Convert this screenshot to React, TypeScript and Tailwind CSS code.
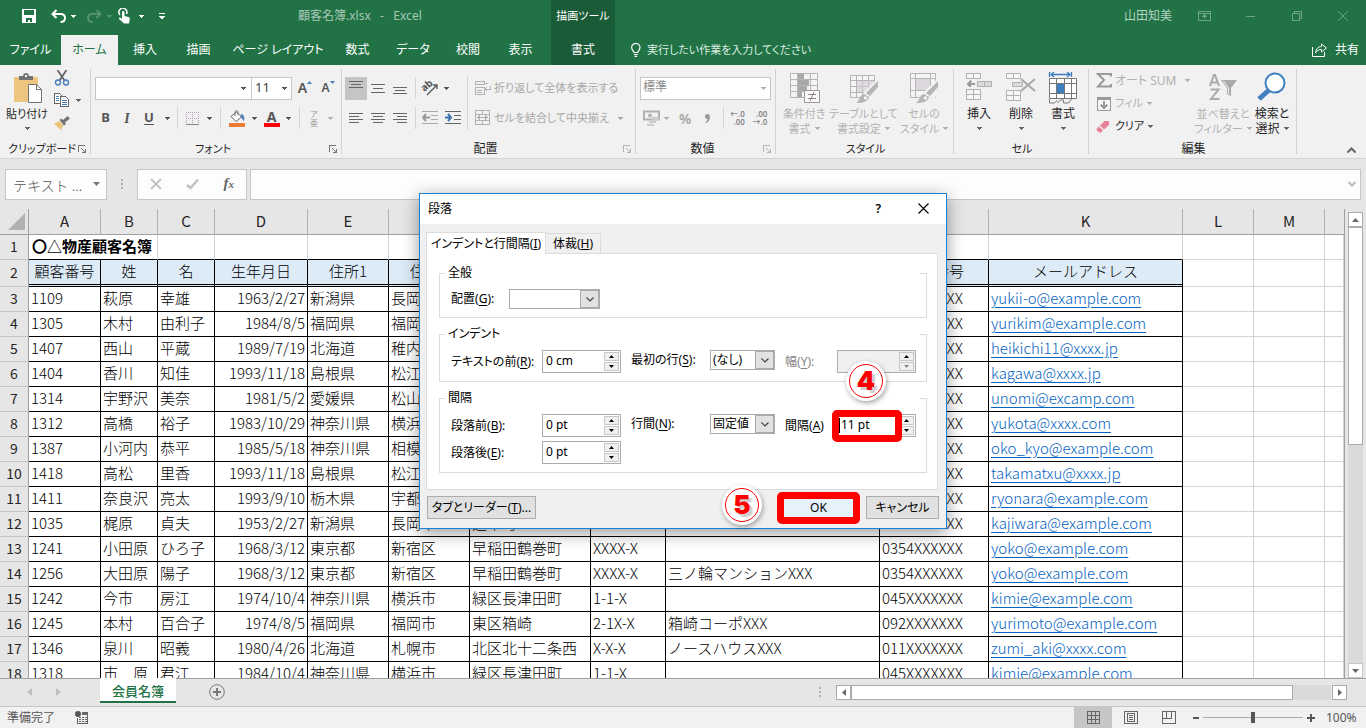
import React, { useState } from 'react';

type Row = [string, string, string, string, string, string, string, string, string, string, string];

const rows: Row[] = [
  ['1109', '萩原', '幸雄', '1963/2/27', '新潟県', '長岡市', '', '', '', '0258XXXXXX', 'yukii-o@example.com'],
  ['1305', '木村', '由利子', '1984/8/5', '福岡県', '福岡市', '', '', '', '092XXXXXXX', 'yurikim@example.com'],
  ['1407', '西山', '平蔵', '1989/7/19', '北海道', '稚内市', '', '', '', '0162XXXXXX', 'heikichi11@xxxx.jp'],
  ['1404', '香川', '知佳', '1993/11/18', '島根県', '松江市', '', '', '', '0852XXXXXX', 'kagawa@xxxx.jp'],
  ['1314', '宇野沢', '美奈', '1981/5/2', '愛媛県', '松山市', '', '', '', '0899XXXXXX', 'unomi@excamp.com'],
  ['1312', '高橋', '裕子', '1983/10/29', '神奈川県', '横浜市', '', '', '', '045XXXXXXX', 'yukota@xxxx.com'],
  ['1387', '小河内', '恭平', '1985/5/18', '神奈川県', '相模原市', '', '', '', '042XXXXXXX', 'oko_kyo@example.com'],
  ['1418', '高松', '里香', '1993/11/18', '島根県', '松江市', '', '', '', '0852XXXXXX', 'takamatxu@xxxx.jp'],
  ['1411', '奈良沢', '亮太', '1993/9/10', '栃木県', '宇都宮市', '', '', '', '0286XXXXXX', 'ryonara@example.com'],
  ['1035', '梶原', '貞夫', '1953/2/27', '新潟県', '長岡市', '蓬平町', '', '', '0258XXXXXX', 'kajiwara@example.com'],
  ['1241', '小田原', 'ひろ子', '1968/3/12', '東京都', '新宿区', '早稲田鶴巻町', 'XXXX-X', '', '0354XXXXXX', 'yoko@example.com'],
  ['1256', '大田原', '陽子', '1968/3/12', '東京都', '新宿区', '早稲田鶴巻町', 'XXXX-X', '三ノ輪マンションXXX', '0354XXXXXX', 'yoko@example.com'],
  ['1242', '今市', '房江', '1974/10/4', '神奈川県', '横浜市', '緑区長津田町', '1-1-X', '', '045XXXXXXX', 'kimie@example.com'],
  ['1245', '本村', '百合子', '1974/8/5', '福岡県', '福岡市', '東区箱崎', '2-1X-X', '箱崎コーポXXX', '092XXXXXXX', 'yurimoto@example.com'],
  ['1346', '泉川', '昭義', '1980/4/26', '北海道', '札幌市', '北区北十二条西', 'X-X-X', 'ノースハウスXXX', '011XXXXXXX', 'zumi_aki@xxxx.com'],
  ['1318', '市　原', '君江', '1984/10/4', '神奈川県', '横浜市', '緑区長津田町', '1-1-X', '', '045XXXXXXX', 'kimie@example.com'],
];

const headings = ['顧客番号', '姓', '名', '生年月日', '住所1', '住所2', '住所3', '番地', '建物', '電話番号', 'メールアドレス'];
const letters = ['A', 'B', 'C', 'D', 'E', 'F', 'G', 'H', 'I', 'J', 'K', 'L', 'M', ''];

const Caret = ({ className = '' }: { className?: string }) => (
  <svg className={`w-[5px] h-[3px] shrink-0 ${className}`} viewBox="0 0 5 3" fill="currentColor" shapeRendering="crispEdges">
    <path d="M0 0h5L2.5 3z" />
  </svg>
);

/* ---------- Title bar and tabs ---------- */

const tabs = [
  { label: 'ファイル', w: 'w-[61px]' },
  { label: 'ホーム', w: 'w-[57px]' },
  { label: '挿入', w: 'w-[54px]' },
  { label: '描画', w: 'w-[53px]' },
  { label: 'ページ レイアウト', w: 'w-[106px]' },
  { label: '数式', w: 'w-[53px]' },
  { label: 'データ', w: 'w-[58px]' },
  { label: '校閲', w: 'w-[52px]' },
  { label: '表示', w: 'w-[53px]' },
];

const Header = () => (
  <header className="flex shrink-0 bg-[#217346] text-white h-[65px]">
    <div className="w-[551px] shrink-0 flex flex-col">
      <div className="flex items-center h-[35px] pl-[22px] pb-[3px]">
        <button aria-label="上書き保存" className="w-[14px]">
          <svg className="w-[14px] h-[14px]" viewBox="0 0 14 14" shapeRendering="crispEdges">
            <path fill="#fff" fillRule="evenodd" d="M0 0h14v14H0zM2 1v5h10V1zM4 9v4h2v-2h2v2h2V9z" />
          </svg>
        </button>
        <button aria-label="元に戻す" className="ml-[15px] w-[15px]">
          <svg className="w-[15px] h-[14px]" viewBox="0 0 15 14" fill="none" stroke="#fff" strokeWidth="2">
            <path d="M5.500 1L1.500 5l4 4M2 5h7.500c3 0 4.500 1.500 4.500 4s-2 4-4.500 4" />
          </svg>
        </button>
        <Caret className="ml-[5px]" />
        <button aria-label="やり直し" className="ml-[11px] w-[15px]">
          <svg className="w-[15px] h-[14px]" viewBox="0 0 15 14" fill="none" stroke="#569072" strokeWidth="2">
            <path d="M9.500 1l4 4-4 4M13 5H5.500C2.500 5 1 6.500 1 9s2 4 4.500 4" />
          </svg>
        </button>
        <Caret className="ml-[5px] text-[#569072]" />
        <button aria-label="タッチ/マウス モードの切り替え" className="ml-[6px] w-[12px]">
          <svg className="w-[12px] h-[16px]" viewBox="0 0 12 16">
            <path d="M2 7A4 4 0 1 1 8.500 6" fill="none" stroke="#fff" strokeWidth="1.500" />
            <path d="M4 4.500c0-2 2.500-2 2.500 0V8l4 1c1 .3 1.500 1 1.300 2L11 15.500H6L1 11c-.6-1 .6-2 1.500-1.300L4 11z" fill="#fff" />
          </svg>
        </button>
        <Caret className="ml-[9px]" />
        <button aria-label="クイック アクセス ツール バーのユーザー設定" className="ml-[15px] w-[6px]">
          <svg className="w-[6px] h-[7px]" viewBox="0 0 6 7" fill="#fff" shapeRendering="crispEdges">
            <path d="M0 0h6v1H0zM0 3h6L3 6.500z" />
          </svg>
        </button>
        <h1 className="ml-[133px] text-[12px] text-[#a6c7b5] whitespace-pre">顧客名簿.xlsx   -   Excel</h1>
      </div>
      <nav className="flex flex-1 text-[12px]">
        {tabs.map((tab) => (
          <button
            key={tab.label}
            className={`${tab.w} h-[30px] whitespace-nowrap ${tab.label === 'ホーム' ? 'bg-[#f1f1f1] text-[#217346]' : ''}`}
          >
            {tab.label}
          </button>
        ))}
      </nav>
    </div>

    <div className="w-[64px] shrink-0 bg-[#1b5c38] flex flex-col items-center text-[12px]">
      <div className="h-[35px] leading-[32px] text-[11px] whitespace-nowrap">描画ツール</div>
      <button className="h-[30px] w-full">書式</button>
    </div>

    <div className="flex-1 flex flex-col min-w-0">
      <div className="flex items-center justify-end h-[35px] pb-[4px] pr-[17px] text-[12px]">
        <span className="text-[#b5d3c2] mr-[26px]">山田知美</span>
        <svg className="w-[151px] h-[12px]" viewBox="0 0 151 12" fill="none" stroke="#6fa388" shapeRendering="crispEdges">
          <path d="M.5 1.500h12v9H.5zM.5 3.500h12M6.500 9V5M4.500 7l2-2 2 2" />
          <path d="M48 6.500h9" />
          <path d="M94.500 3.500h7v7h-7zM96.500 3.500v-2h7v7h-2" />
          <path d="M140 1l10 10M150 1l-10 10" shapeRendering="auto" />
        </svg>
      </div>
      <div className="flex items-center h-[30px] pl-[15px] pr-[7px] text-[12px]">
        <svg className="w-[12px] h-[14px] mr-[5px]" viewBox="0 0 12 14" fill="none" stroke="#fff" strokeWidth="1.200">
          <path d="M4 9.500C4 8 1.600 7.300 1.600 4.600a4.200 4.200 0 0 1 8.400 0C10 7.300 7.700 8 7.700 9.500zM4 11.500h3.700M4.500 13.400h2.700" />
        </svg>
        <span className="text-[#dcebe2] text-[11px] whitespace-nowrap">実行したい作業を入力してください</span>
        <button className="ml-auto flex items-center gap-[8px]">
          <svg className="w-[15px] h-[14px]" viewBox="0 0 15 14" fill="none" stroke="#fff">
            <path d="M.5 4v9.500h12V9M9.500 1l5 4-5 4V6.500C6.500 6.500 5 7.500 3.500 10c.3-4 2.500-6.500 6-6.500z" />
          </svg>
          共有
        </button>
      </div>
    </div>
  </header>
);

/* ---------- Ribbon ---------- */

const Group = ({
  title, width, children, launcher, dim, kana,
}: { title: string; width: string; children: React.ReactNode; launcher?: boolean; dim?: boolean; kana?: boolean }) => (
  <section className={`flex shrink-0 ${width}`}>
    <div className="flex-1 flex flex-col min-w-0">
      <div className="h-[75px]">{children}</div>
      <div className={`flex items-center h-[18px] text-[#262626] pr-[4px] pl-[6px] ${kana ? 'text-[11px]' : 'text-[12px]'}`}>
        <span className="flex-1 text-center whitespace-nowrap">{title}</span>
        {launcher && (
          <button aria-label={`${title}の設定`} className={dim ? 'text-[#b5b5b5]' : 'text-[#777]'}>
            <svg className="w-[8px] h-[8px]" viewBox="0 0 8 8" fill="none" stroke="currentColor" shapeRendering="crispEdges">
              <path d="M.5 7V.5H7M3 3l4 4M7.500 3.500v4h-4" />
            </svg>
          </button>
        )}
      </div>
    </div>
    <div className="w-px my-1 bg-[#d2d2d2]" />
  </section>
);

const Big = ({
  width, lines, icon, dim, caretBelow, kana,
}: { width: string; lines: string[]; icon: React.ReactNode; dim?: boolean; caretBelow?: boolean; kana?: boolean }) => (
  <button
    className={`${width} shrink-0 pt-[7px] flex flex-col items-center leading-[15px] whitespace-nowrap ${kana ? 'text-[11px]' : 'text-[12px]'} ${dim ? 'text-[#b1b1b1]' : 'text-[#262626]'}`}
  >
    <svg className="w-[32px] h-[32px] mb-[2px]" viewBox="0 0 32 32">{icon}</svg>
    <span>{lines[0]}</span>
    {caretBelow ? (
      <span className="h-[15px] flex items-center"><Caret className={dim ? 'text-[#b1b1b1]' : 'text-[#666]'} /></span>
    ) : (
      <span className="flex items-center gap-[4px]">
        {lines[1]}
        <Caret className={dim ? 'text-[#b1b1b1]' : 'text-[#666]'} />
      </span>
    )}
  </button>
);

const Tool = ({ width, label, children, active }: { width: string; label: string; children: React.ReactNode; active?: boolean }) => (
  <button aria-label={label} className={`${width} h-[23px] shrink-0 flex items-center justify-center ${active ? 'bg-[#c5c5c5]' : ''}`}>
    {children}
  </button>
);

const Sep = () => <div className="w-px h-[22px] shrink-0 bg-[#d4d4d4]" />;

const Lines = ({ d }: { d: string }) => (
  <svg className="w-[14px] h-[14px]" viewBox="0 0 14 14" stroke="#666" shapeRendering="crispEdges"><path d={d} /></svg>
);

const Clipboard = () => (
  <Group title="クリップボード" width="w-[91px]" launcher kana>
    <div className="flex">
      <Big
        width="w-[54px]"
        lines={['貼り付け']}
        caretBelow
        kana
        icon={
          <>
            <path fill="#ecc57e" d="M3 5h24v25H3z" />
            <path fill="#737373" d="M8 8V4h4c0-4 6-4 6 0h4v4z" />
            <path fill="#f1f1f1" d="M14 3h2v2h-2z" />
            <path fill="#fff" stroke="#737373" d="M17.500 12.500h8l5 5v13h-13z" />
            <path fill="none" stroke="#737373" d="M25.500 12.500v5h5" />
          </>
        }
      />
      <div className="flex flex-col pt-[5px] gap-[7px]">
        <button aria-label="切り取り">
          <svg className="w-[16px] h-[16px]" viewBox="0 0 16 16" fill="none">
            <path d="M3.500 0l7 10.500M12.500 0l-7 10.500" stroke="#666" strokeWidth="1.800" />
            <circle cx="4" cy="12.500" r="2.500" stroke="#4a7fb5" strokeWidth="1.400" />
            <circle cx="12" cy="12.500" r="2.500" stroke="#4a7fb5" strokeWidth="1.400" />
          </svg>
        </button>
        <button aria-label="コピー" className="flex items-center gap-[6px] text-[#666]">
          <svg className="w-[16px] h-[15px]" viewBox="0 0 16 15" fill="#fff" stroke="#666" shapeRendering="crispEdges">
            <path d="M.5.5h5l3 3v7h-8z" />
            <path d="M6.500 3.500h5l3 3v7h-8z" />
            <path d="M2 3.500h3M2 5.500h3M2 7.500h3M8 7.500h5M8 9.500h5M8 11.500h5" stroke="#4a7fb5" />
          </svg>
          <Caret />
        </button>
        <button aria-label="書式のコピー/貼り付け">
          <svg className="w-[16px] h-[16px]" viewBox="0 0 16 16">
            <path fill="#ecc57e" d="M0 9l5-3 4.500 4.500L7 15z" />
            <path fill="#737373" d="M5.500 5L7 3.500l2 1.500L13.500 1 16 3.500 11 7.500l1 1.500-2 1.500z" />
          </svg>
        </button>
      </div>
    </div>
  </Group>
);

const FontGroup = () => (
  <Group title="フォント" width="w-[251px]" launcher kana>
    <div className="pl-[4px] pt-[11px] text-[#555]">
      <div className="flex items-center h-[24px]">
        <div className="w-[157px] h-[23px] flex items-center border border-[#c6c6c6] bg-white pr-[5px]">
          <input aria-label="フォント" className="w-full min-w-0 outline-none" defaultValue="" />
          <Caret />
        </div>
        <div className="w-[40px] h-[23px] flex items-center border border-l-0 border-[#c6c6c6] bg-white pl-[3px] pr-[4px]">
          <input aria-label="フォント サイズ" className="w-full min-w-0 text-[13px] text-[#444] outline-none" defaultValue="11" />
          <Caret />
        </div>
        <Tool width="w-[26px]" label="フォント サイズの拡大">
          <span className="text-[14px] font-semibold leading-none">A</span>
          <svg className="w-[5px] h-[14px]" viewBox="0 0 5 14" fill="#4a7fb5"><path d="M0 3h5L2.500 0z" /></svg>
        </Tool>
        <Tool width="w-[20px]" label="フォント サイズの縮小">
          <span className="text-[12px] font-semibold leading-none">A</span>
          <svg className="w-[5px] h-[14px]" viewBox="0 0 5 14" fill="#4a7fb5"><path d="M0 0h5L2.500 3z" /></svg>
        </Tool>
      </div>
      <div className="flex items-center h-[24px] mt-[6px]">
        <Tool width="w-[21px]" label="太字"><b className="text-[13px]">B</b></Tool>
        <Tool width="w-[22px]" label="斜体"><i className="text-[14px] font-bold font-['Liberation_Serif',serif]">I</i></Tool>
        <Tool width="w-[22px]" label="下線"><b className="text-[13px] underline underline-offset-2">U</b></Tool>
        <Tool width="w-[14px]" label="下線の種類"><Caret /></Tool>
        <div className="w-[3px]" />
        <Sep />
        <Tool width="w-[29px]" label="罫線">
          <svg className="w-[13px] h-[13px]" viewBox="0 0 13 13" fill="none" stroke="#b59fb8" shapeRendering="crispEdges">
            <path strokeDasharray="1 1" d="M.5 0v12M6.500 0v12M12.500 0v12M0 .5h13M0 6.500h13" />
            <path stroke="#888" d="M0 12.500h13" />
          </svg>
        </Tool>
        <Tool width="w-[5px]" label="罫線の種類"><Caret /></Tool>
        <div className="w-[8px]" />
        <Sep />
        <Tool width="w-[33px]" label="塗りつぶしの色">
          <svg className="w-[17px] h-[17px]" viewBox="0 0 17 17">
            <path d="M2 6.500L7.500 2l5 5-5.500 4.500z" fill="#fff" stroke="#666" />
            <path d="M6 6V2.500C6 .2 9 .2 9 2.500V5" fill="none" stroke="#666" />
            <path d="M12 4c3 .5 4 4 3 7-2-1-1.500-3-3.500-4z" fill="#4a7fb5" />
            <path d="M0 13h16v4H0z" fill="#ed7d31" />
          </svg>
        </Tool>
        <Caret className="-ml-[2px]" />
        <Tool width="w-[29px]" label="フォントの色">
          <span className="flex flex-col items-center text-[14px] font-bold leading-[13px] border-b-4 border-[#ff0000] w-[16px]">A</span>
        </Tool>
        <Caret />
        <div className="w-[8px]" />
        <Sep />
        <Tool width="w-[28px]" label="ふりがなの表示">
          <span className="text-[8px] leading-[9px] text-[#999] flex flex-col"><span>ア</span><span>亜</span></span>
        </Tool>
        <Caret className="text-[#b5b5b5]" />
      </div>
    </div>
  </Group>
);

const Alignment = () => (
  <Group title="配置" width="w-[294px]" launcher dim>
    <div className="flex pl-[3px] pt-[11px]">
      <div>
        <div className="flex items-center h-[24px]">
          <Tool width="w-[22px]" label="上揃え" active><Lines d="M0 .5h14M2 3.500h10M0 6.500h14" /></Tool>
          <Tool width="w-[22px]" label="上下中央揃え"><Lines d="M0 3.500h14M2 7.500h10M0 11.500h14" /></Tool>
          <Tool width="w-[22px]" label="下揃え"><Lines d="M0 6.500h14M2 9.500h10M0 12.500h14" /></Tool>
          <div className="w-[4px]" />
          <Sep />
          <Tool width="w-[28px]" label="方向">
            <svg className="w-[18px] h-[16px] overflow-visible" viewBox="0 0 18 16" fill="none" stroke="#555">
              <text x="1" y="10" transform="rotate(-40 5 8)" fontSize="10" fontWeight="700" fill="#555" stroke="none">ab</text>
              <path d="M6 15L16 5M12 5h4v4" strokeWidth="1.300" />
            </svg>
          </Tool>
          <Caret className="text-[#555]" />
        </div>
        <div className="flex items-center h-[24px] mt-[6px]">
          <Tool width="w-[22px]" label="左揃え"><Lines d="M0 2.500h14M0 5.500h10M0 8.500h14M0 11.500h10" /></Tool>
          <Tool width="w-[22px]" label="中央揃え"><Lines d="M0 2.500h14M2 5.500h10M0 8.500h14M2 11.500h10" /></Tool>
          <Tool width="w-[22px]" label="右揃え"><Lines d="M0 2.500h14M4 5.500h10M0 8.500h14M4 11.500h10" /></Tool>
          <div className="w-[4px]" />
          <Sep />
          <Tool width="w-[28px]" label="インデントを減らす">
            <svg className="w-[16px] h-[14px]" viewBox="0 0 16 14" fill="none" stroke="#aaa" shapeRendering="crispEdges">
              <path d="M0 .5h16M9 4.500h7M9 8.500h7M0 12.500h16" />
              <path strokeWidth="2" stroke="#999" d="M1 6.500h7M4 3L1 6.500 4 10" shapeRendering="auto" />
            </svg>
          </Tool>
          <Tool width="w-[18px]" label="インデントを増やす">
            <svg className="w-[16px] h-[14px]" viewBox="0 0 16 14" fill="none" stroke="#666" shapeRendering="crispEdges">
              <path d="M0 .5h16M9 4.500h7M9 8.500h7M0 12.500h16" />
              <path strokeWidth="2" stroke="#3f74b0" d="M0 6.500h6M3 3l3 3.500L3 10" shapeRendering="auto" />
            </svg>
          </Tool>
        </div>
      </div>
      <div className="w-px h-[54px] bg-[#d4d4d4] ml-[5px]" />
      <div className="pl-[7px] text-[11px] text-[#a8a8a8]">
        <button className="flex items-center gap-[3px] h-[24px] whitespace-nowrap">
          <svg className="w-[16px] h-[16px]" viewBox="0 0 16 16" fill="none" stroke="#b1b1b1" shapeRendering="crispEdges">
            <path d="M.5 1.500h9v3h-9zM.5 7.500h9v7h-9zM2 10.500h5M2 12.500h5M9 3.500h4M15.500 6v3h-5M12.500 6.500l-3 2.500 3 2.500" />
          </svg>
          折り返して全体を表示する
        </button>
        <button className="flex items-center gap-[3px] h-[24px] mt-[6px] whitespace-nowrap">
          <svg className="w-[16px] h-[16px]" viewBox="0 0 16 16" fill="none" stroke="#b1b1b1" shapeRendering="crispEdges">
            <path d="M.5.500h14v14H.5zM.5 4.500h14M.5 10.500h14M7.500 0v4M7.500 11v4M3 7.500h9M5 5.500l-2 2 2 2M10 5.500l2 2-2 2" />
          </svg>
          セルを結合して中央揃え
          <Caret className="ml-[6px]" />
        </button>
      </div>
    </div>
  </Group>
);

const NumberGroup = () => (
  <Group title="数値" width="w-[140px]" launcher dim>
    <div className="pl-[4px] pt-[11px] text-[#b1b1b1]">
      <div className="flex items-center h-[24px]">
        <div className="relative w-[131px] h-[23px]">
          <select aria-label="数値の書式" disabled className="block appearance-none w-full h-full bg-white border border-[#c6c6c6] pl-[2px] pb-[3px] text-[12px] text-[#8a8a8a]">
            <option>標準</option>
          </select>
          <Caret className="absolute right-[5px] top-[10px]" />
        </div>
      </div>
      <div className="flex items-center h-[24px] mt-[6px]">
        <Tool width="w-[22px]" label="通貨表示形式">
          <svg className="w-[17px] h-[17px]" viewBox="0 0 17 17">
            <path d="M1 1.500h15v8H1z" fill="none" stroke="#b1b1b1" strokeWidth="2" />
            <circle cx="7" cy="5.500" r="2" fill="#b1b1b1" />
            <path d="M9 7h7v3H9zM6 11h7v2H6zM4 14h7v2H4z" fill="#ccc" />
          </svg>
        </Tool>
        <Caret className="ml-[2px]" />
        <Tool width="w-[32px]" label="パーセント スタイル"><b className="text-[14px] text-[#a5a5a5] font-semibold">%</b></Tool>
        <Tool width="w-[12px]" label="桁区切りスタイル">
          <svg className="w-[5px] h-[9px]" viewBox="0 0 5 9" fill="#999">
            <path d="M2.500 0C4 0 5 1 5 3c0 3-1.500 5-4 6l-.5-1C2 7 2.500 6 2.500 5 1 5 0 4 0 2.500S1 0 2.500 0z" />
          </svg>
        </Tool>
        <div className="w-[10px]" />
        <Sep />
        <Tool width="w-[27px]" label="小数点以下の表示桁数を増やす">
          <span className="text-[8px] leading-[8px] font-semibold text-[#888] text-right">←.0<br />.00</span>
        </Tool>
        <Tool width="w-[18px]" label="小数点以下の表示桁数を減らす">
          <span className="text-[8px] leading-[8px] font-semibold text-[#888] text-right">.00<br />→.0</span>
        </Tool>
      </div>
    </div>
  </Group>
);

const Brush = () => (
  <>
    <path fill="#f1f1f1" d="M30 6l-14 14-8 11h16l8-14z" />
    <path fill="#b5b5b5" d="M30 9v6l-8 9-4-3zM16 22l5 3c-1 5-7 6-13 6 4-2 3-8 8-9z" />
    <circle cx="17.500" cy="26" r="1.800" fill="#f1f1f1" />
  </>
);

const Styles = () => (
  <Group title="スタイル" width="w-[178px]" kana>
    <div className="flex">
      <Big
        width="w-[56px]"
        lines={['条件付き', '書式']}
        dim
        kana
        icon={
          <>
            <path d="M2.500 1.500h27v24h-27zM2.500 7.500h27M2.500 13.500h27M2.500 19.500h27M9.500 1v25M22.500 1v25" fill="#f6f3f6" stroke="#b5b5b5" />
            <path fill="#a9a9a9" d="M10 2h6v5h-6zM10 8h11v5H10zM10 14h9v5h-9zM10 20h4v5h-4z" />
            <path d="M16.500 18.500h15v12h-15z" fill="#fbf7fb" stroke="#999" />
            <path d="M20 22.500h8M20 26.500h8M26 20l-4 9" stroke="#888" />
          </>
        }
      />
      <Big
        width="w-[63px]"
        lines={['テーブルとして', '書式設定']}
        dim
        kana
        icon={
          <>
            <path d="M2.500 3.500h24v22h-24zM2.500 8.500h24M2.500 14.500h24M2.500 20.500h24M8.500 3v22M14.500 3v22M20.500 3v22" fill="#f6f3f6" stroke="#b5b5b5" />
            <path fill="#e0dbe0" d="M9 9h17v11H9z" />
            <path d="M9 14.500h17M14.500 9v11M20.500 9v11" stroke="#c5c5c5" />
            <Brush />
          </>
        }
      />
      <Big
        width="w-[58px]"
        lines={['セルの', 'スタイル']}
        dim
        kana
        icon={
          <>
            <path d="M2.500 1.500h25v24h-25zM2.500 6.500h25M2.500 18.500h25M7.500 1v25M22.500 1v25" fill="#f6f3f6" stroke="#b5b5b5" />
            <path fill="#dcd7dc" d="M8 7h14v11H8z" />
            <Brush />
          </>
        }
      />
    </div>
  </Group>
);

const Cells = () => (
  <Group title="セル" width="w-[135px]" kana>
    <div className="flex pl-[4px]">
      <Big
        width="w-[42px]"
        lines={['挿入']}
        caretBelow
        icon={
          <g fill="#f8f5f8" stroke="#b1b1b1" shapeRendering="crispEdges">
            <path d="M3.500 1.500h14v5h-14zM10.500 1.500v5M3.500 17.500h14v10h-14zM3.500 22.500h14M10.500 17.500v10" />
            <path fill="#ddd8dd" d="M14.500 9.500h14v5h-14zM21.500 9.500v5" />
            <path fill="none" stroke="#999" strokeWidth="2" d="M5 12h7M8 9l-3 3 3 3" />
          </g>
        }
      />
      <Big
        width="w-[42px]"
        lines={['削除']}
        caretBelow
        icon={
          <g fill="#f8f5f8" stroke="#b1b1b1">
            <path d="M1.500 1.500h14v5h-14zM8.500 1.500v5M1.500 18.500h14v10h-14zM1.500 23.500h14M8.500 18.500v10" />
            <path fill="#ddd8dd" d="M7.500 10.500h10v4h-10z" />
            <path fill="none" stroke="#aaa" strokeWidth="2.200" d="M16 7l14 12M30 7L16 19" />
          </g>
        }
      />
      <Big
        width="w-[42px]"
        lines={['書式']}
        caretBelow
        icon={
          <>
            <path fill="none" stroke="#3f7fbf" strokeWidth="1.300" d="M2.500 0v5M24.500 0v5M4 2.500h19M7 0L4 2.500 7 5M20 0l3 2.500L20 5" />
            <path d="M2.500 6.500h27v20h-27zM2.500 11.500h27M2.500 21.500h27M9.500 6v20M17.500 6v20M24.500 6v20" fill="#fff" stroke="#777" />
            <path fill="#3f7fbf" d="M10 12h7v9h-7z" />
            <path fill="none" stroke="#777" d="M2.500 27v4h5l3-3M10.500 31l3-3h3v3h5l3-4" />
          </>
        }
      />
    </div>
  </Group>
);

const Editing = () => (
  <Group title="編集" width="w-[208px]">
    <div className="flex pl-[7px]">
      <div className="w-[102px] flex flex-col pt-[4px] text-[12px] text-[#b1b1b1]">
        <button className="flex items-center h-[23px] whitespace-nowrap">
          <svg className="w-[16px] h-[15px] mr-[3px]" viewBox="0 0 16 15" fill="none" stroke="#999" strokeWidth="2">
            <path d="M15 3.500V1H2l6 6-6 6.500h13V11" />
          </svg>
          オート SUM
          <Caret className="ml-auto mr-[8px]" />
        </button>
        <button className="flex items-center h-[23px] whitespace-nowrap text-[11px]">
          <svg className="w-[16px] h-[16px] mr-[3px]" viewBox="0 0 16 16" fill="none" stroke="#999" shapeRendering="crispEdges">
            <path d="M1.500 1.500h13v13h-13z" fill="#f8f5f8" />
            <path d="M1 2.500h14" strokeWidth="3" />
            <path d="M8 5v7M5 9l3 3 3-3" strokeWidth="2" />
          </svg>
          フィル
          <Caret className="ml-[4px]" />
        </button>
        <button className="flex items-center h-[23px] whitespace-nowrap text-[11px] text-[#262626]">
          <svg className="w-[14px] h-[14px] mr-[5px]" viewBox="0 0 14 14">
            <path d="M8.500 1h4.500v4L8 9.500 4 5.500z" fill="#e8829a" />
            <path d="M3 6.500L7 10.500 5 12.500H3L.5 10V9z" fill="#e8829a" />
          </svg>
          クリア
          <Caret className="ml-[4px] text-[#666]" />
        </button>
      </div>
      <Big
        width="w-[50px]"
        lines={['並べ替えと', 'フィルター']}
        dim
        kana
        icon={
          <>
            <path fill="none" stroke="#aaa" strokeWidth="2" d="M3 14L7 3h1l4 11M5 10.500h6M3.500 17.500h8L4 27h8.500" />
            <path fill="#aaa" d="M14 8h16l-6 8v8l-4-2v-6z" />
            <path d="M16.500 9l5 7v6" stroke="#f1f1f1" fill="none" />
          </>
        }
      />
      <Big
        width="w-[48px]"
        lines={['検索と', '選択']}
        icon={
          <>
            <path d="M13 18L3 27" stroke="#3f7fbf" strokeWidth="5" />
            <circle cx="19" cy="11" r="9.500" fill="#fff" stroke="#3f7fbf" strokeWidth="2" />
          </>
        }
      />
    </div>
  </Group>
);

const Ribbon = () => (
  <div className="flex shrink-0 bg-[#f1f1f1] border-b border-[#d2d2d2] overflow-hidden">
    <Clipboard />
    <FontGroup />
    <Alignment />
    <NumberGroup />
    <Styles />
    <Cells />
    <Editing />
    <button aria-label="リボンを折りたたむ" className="ml-auto self-end mr-[10px] mb-[5px]">
      <svg className="w-[9px] h-[6px]" viewBox="0 0 9 6" fill="none" stroke="#666" strokeWidth="2"><path d="M.5 5.500l4-4 4 4" /></svg>
    </button>
  </div>
);

const FormulaBar = () => (
  <div className="flex shrink-0 items-center h-[50px] pl-[5px] pr-[5px] bg-[#e6e6e6]">
    <div className="flex items-center w-[102px] h-[31px] bg-[#fdfdfd] border border-[#c6c6c6] pl-[7px] pr-[6px] text-[#555]">
      <input
        aria-label="名前ボックス"
        className="w-full min-w-0 pt-[2px] text-[14px] font-light outline-none font-['Noto_Sans_CJK_JP',sans-serif] [font-feature-settings:normal]"
        defaultValue="テキスト ..."
      />
      <svg className="w-[7px] h-[4px] shrink-0" viewBox="0 0 7 4" fill="#777"><path d="M0 0h7L3.500 4z" /></svg>
    </div>
    <svg className="w-[2px] h-[10px] mx-[14px]" viewBox="0 0 2 10" fill="#b1b1b1"><path d="M0 0h2v2H0zM0 4h2v2H0zM0 8h2v2H0z" /></svg>
    <div className="flex items-center justify-around w-[110px] h-[31px] bg-[#fdfdfd] border border-[#c6c6c6]">
      <button aria-label="キャンセル">
        <svg className="w-[12px] h-[12px]" viewBox="0 0 12 12" stroke="#c2c2c2" strokeWidth="1.800"><path d="M1 1l10 10M11 1L1 11" /></svg>
      </button>
      <button aria-label="入力">
        <svg className="w-[13px] h-[12px]" viewBox="0 0 13 12" fill="none" stroke="#c2c2c2" strokeWidth="2.500"><path d="M1 7l3.500 3L12 1.500" /></svg>
      </button>
      <button aria-label="関数の挿入" className="font-['Liberation_Serif',serif] italic font-bold text-[15px] leading-none text-[#666] pb-[2px]">
        f<span className="text-[11px]">x</span>
      </button>
    </div>
    <div className="flex flex-1 items-center h-[31px] ml-[3px] bg-[#fdfdfd] border border-[#c6c6c6] pr-[4px]">
      <input aria-label="数式バー" className="flex-1 min-w-0 outline-none" defaultValue="" />
      <svg className="w-[8px] h-[6px]" viewBox="0 0 8 6" fill="none" stroke="#bbb" strokeWidth="2"><path d="M.5 1L4 4.500 7.500 1" /></svg>
    </div>
  </div>
);

/* ---------- Worksheet ---------- */

const dataCell = 'h-[25px] border-r border-b border-black px-[2px] pb-[3px]';
const blankCell = 'border-r border-b border-[#d4d4d4]';
const rowHead = 'border-r border-b border-r-[#9f9f9f] border-b-[#c6c6c6] bg-[#e6e6e6] font-normal text-[14px] text-[#262626] text-center pb-[2px]';

const Sheet = () => (
  <div className="flex flex-1 min-h-0 bg-[#e6e6e6]">
    <div className="flex-1 min-w-0 overflow-hidden border-r border-[#9f9f9f] bg-white">
      <table className="w-full table-fixed border-separate border-spacing-0 text-[15px] leading-[20px] whitespace-nowrap text-black font-light font-['Noto_Sans_CJK_JP',sans-serif] [font-feature-settings:normal]">
        <colgroup>
          <col className="w-[29px]" />
          <col className="w-[72px]" />
          <col className="w-[57px]" />
          <col className="w-[57px]" />
          <col className="w-[93px]" />
          <col className="w-[81px]" />
          <col className="w-[81px]" />
          <col className="w-[121px]" />
          <col className="w-[75px]" />
          <col className="w-[214px]" />
          <col className="w-[109px]" />
          <col className="w-[194px]" />
          <col className="w-[71px]" />
          <col className="w-[71px]" />
          <col />
        </colgroup>
        <thead>
          <tr className="bg-[#e6e6e6]">
            <th className="h-[26px] border-r border-b border-[#9f9f9f]">
              <button aria-label="すべて選択" className="flex ml-[8px]">
                <svg className="w-[17px] h-[17px]" viewBox="0 0 17 17" fill="#b1b1b1"><path d="M17 0v17H0z" /></svg>
              </button>
            </th>
            {letters.map((letter, i) => (
              <th key={i} className={`font-normal text-[#262626] pb-[2px] border-b border-b-[#9f9f9f] ${letter ? 'border-r border-r-[#b1b1b1]' : ''}`}>
                {letter}
              </th>
            ))}
          </tr>
        </thead>
        <tbody>
          <tr>
            <th className={rowHead}>1</th>
            <td colSpan={2} className="h-[25px] border-b border-b-black border-r border-r-[#d4d4d4] px-[3px] pb-[2px] font-bold">〇△物産顧客名簿</td>
            {letters.slice(2).map((_, i) => (
              <td key={i} className={`border-r border-b border-r-[#d4d4d4] ${i < 9 ? 'border-b-black' : 'border-b-[#d4d4d4]'}`} />
            ))}
          </tr>
          <tr>
            <th className={rowHead}>2</th>
            {headings.map((h) => (
              <td key={h} className="h-[27px] bg-[#ddebf7] border-r border-r-black border-b-3 border-double border-b-black text-center pb-[2px]">{h}</td>
            ))}
            <td className={blankCell} />
            <td className={blankCell} />
            <td className={blankCell} />
          </tr>
          {rows.map((row, r) => (
            <tr key={r}>
              <th className={rowHead}>{r + 3}</th>
              {row.map((value, c) => (
                <td key={c} className={`${dataCell} ${c === 3 ? 'text-right' : ''}`}>
                  {c === 10 ? <a href={`mailto:${value}`} className="text-[#0563c1] underline underline-offset-3">{value}</a> : value}
                </td>
              ))}
              <td className={blankCell} />
              <td className={blankCell} />
              <td className={blankCell} />
            </tr>
          ))}
        </tbody>
      </table>
    </div>
    <div className="w-[21px] flex flex-col items-center pt-[3px]">
      <button aria-label="上へスクロール" className="w-[15px] h-[15px] flex items-center justify-center bg-white border border-[#ababab]">
        <svg className="w-[7px] h-[4px]" viewBox="0 0 7 4" fill="#666"><path d="M0 4h7L3.500 0z" /></svg>
      </button>
      <div className="flex-1 w-[15px] bg-[#dadada] flex flex-col">
        <div className="h-1/2 bg-white border border-[#ababab]" />
      </div>
      <button aria-label="下へスクロール" className="w-[15px] h-[15px] flex items-center justify-center bg-white border border-[#c6c6c6]">
        <svg className="w-[7px] h-[4px]" viewBox="0 0 7 4" fill="#666"><path d="M0 0h7L3.500 4z" /></svg>
      </button>
    </div>
  </div>
);

const SheetTabs = () => (
  <div className="flex shrink-0 items-start h-[28px] bg-[#e6e6e6] border-t border-[#9f9f9f]">
    <div className="w-[100px] h-[25px] flex items-center pl-[27px] gap-[24px]">
      <button aria-label="前のシート"><svg className="w-[5px] h-[8px]" viewBox="0 0 5 8" fill="#c0c0c0"><path d="M5 0v8L0 4z" /></svg></button>
      <button aria-label="次のシート"><svg className="w-[5px] h-[8px]" viewBox="0 0 5 8" fill="#c0c0c0"><path d="M0 0v8l5-4z" /></svg></button>
    </div>
    <button className="w-[76px] h-[25px] -mt-px bg-white border-b-2 border-[#217346] pt-[3px] text-[13px] leading-[20px] font-medium text-[#217346]">会員名簿</button>
    <button aria-label="新しいシート" className="ml-[33px] mt-[5px]">
      <svg className="w-[16px] h-[16px]" viewBox="0 0 16 16" fill="none" stroke="#777">
        <circle cx="8" cy="8" r="7.300" />
        <path strokeWidth="2" d="M4 8h8M8 4v8" />
      </svg>
    </button>
    <div className="ml-auto flex items-start pt-[6px] pr-[19px]">
      <svg className="w-[2px] h-[10px] mt-[2px] mr-[15px]" viewBox="0 0 2 10" fill="#b1b1b1"><path d="M0 0h2v2H0zM0 4h2v2H0zM0 8h2v2H0z" /></svg>
      <button aria-label="左へスクロール" className="w-[15px] h-[15px] flex items-center justify-center bg-white border border-[#ababab]">
        <svg className="w-[4px] h-[7px]" viewBox="0 0 4 7" fill="#666"><path d="M4 0v7L0 3.500z" /></svg>
      </button>
      <div className="w-[442px] h-[15px] bg-white border border-[#ababab]" />
      <div className="w-[38px] h-[15px] bg-[#dadada] mr-[1px]" />
      <button aria-label="右へスクロール" className="w-[15px] h-[15px] flex items-center justify-center bg-white border border-[#ababab]">
        <svg className="w-[4px] h-[7px]" viewBox="0 0 4 7" fill="#666"><path d="M0 0v7l4-3.500z" /></svg>
      </button>
    </div>
  </div>
);

const StatusBar = () => {
  const [zoom, setZoom] = useState(100);
  return (
    <footer className="flex shrink-0 items-center h-[22px] bg-[#f1f1f1] border-t border-[#c6c6c6] pl-[7px] pr-[8px] text-[12px] text-[#555]">
      <span>準備完了</span>
      <svg className="w-[14px] h-[14px] ml-[20px]" viewBox="0 0 14 14" fill="none" stroke="#666" shapeRendering="crispEdges">
        <circle cx="3" cy="3" r="3" fill="#555" stroke="none" shapeRendering="auto" />
        <path d="M2.500 7v5.500h10V1.500H7" />
        <path d="M7 3.500h5M7 2.500h5M4 6.500h2M7 6.500h2M10 6.500h2M4 8.500h2M7 8.500h2M10 8.500h2M4 10.500h2M7 10.500h2M10 10.500h2" />
      </svg>
      <div className="ml-auto flex items-center h-full">
        <button aria-label="標準" className="w-[38px] h-full flex items-center justify-center bg-[#c6c6c6]">
          <svg className="w-[13px] h-[13px]" viewBox="0 0 13 13" fill="none" stroke="#666" shapeRendering="crispEdges"><path d="M.5.5h12v12H.5zM.5 4.500h12M.5 8.500h12M4.500 0v13M8.500 0v13" /></svg>
        </button>
        <button aria-label="ページ レイアウト" className="w-[38px] h-full flex items-center justify-center">
          <svg className="w-[14px] h-[13px]" viewBox="0 0 14 13" fill="none" stroke="#666" shapeRendering="crispEdges"><path d="M.5.5h13v12H.5zM3.500 2.500h7v8h-7zM5 4.500h4M5 6.500h4M5 8.500h4" /></svg>
        </button>
        <button aria-label="改ページ プレビュー" className="w-[38px] h-full flex items-center justify-center">
          <svg className="w-[14px] h-[13px]" viewBox="0 0 14 13" fill="none" stroke="#666" shapeRendering="crispEdges"><path d="M.5.5h13v12H.5zM4.500 0v7.500h5V0M.5 7.500h4" /></svg>
        </button>
        <button aria-label="縮小" className="ml-[5px] w-[6px] h-[2px] bg-[#555]" />
        <input
          type="range"
          aria-label="ズーム"
          min={0}
          max={200}
          value={zoom}
          onChange={(e) => setZoom(Number(e.target.value))}
          className="appearance-none w-[100px] h-px bg-[#ababab] mx-[4px] [&::-webkit-slider-thumb]:appearance-none [&::-webkit-slider-thumb]:w-[4px] [&::-webkit-slider-thumb]:h-[11px] [&::-webkit-slider-thumb]:bg-[#555]"
        />
        <button aria-label="拡大">
          <svg className="w-[8px] h-[8px]" viewBox="0 0 8 8" fill="#555" shapeRendering="crispEdges"><path d="M0 3h3V0h2v3h3v2H5v3H3V5H0z" /></svg>
        </button>
        <span className="ml-[11px] w-[32px] text-[12px]">{zoom}%</span>
      </div>
    </footer>
  );
};

/* ---------- Paragraph dialog ---------- */

const Spin = ({ id, value, disabled }: { id: string; value: string; disabled?: boolean }) => (
  <div className={`flex w-[79px] h-[23px] border border-[#ababb0] p-px ${disabled ? 'bg-[#f0f0f0]' : 'bg-white'}`}>
    <input id={id} disabled={disabled} defaultValue={value} className="flex-1 min-w-0 pl-[2px] pb-[2px] outline-none" />
    <div className="flex flex-col w-[15px] gap-px">
      <button aria-label="増やす" className="flex-1 flex items-center justify-center border border-[#c8c8c8] bg-[#f0f0f0]">
        <svg className="w-[5px] h-[3px]" viewBox="0 0 5 3"><path d="M0 3h5L2.500 0z" /></svg>
      </button>
      <button aria-label="減らす" className="flex-1 flex items-center justify-center border border-[#c8c8c8] bg-[#f0f0f0]">
        <svg className="w-[5px] h-[3px]" viewBox="0 0 5 3" fill={disabled ? '#888' : '#000'}><path d="M0 0h5L2.500 3z" /></svg>
      </button>
    </div>
  </div>
);

const Drop = ({ id, value, width }: { id: string; value: string; width: string }) => (
  <div className={`relative h-[20px] ${width}`}>
    <select id={id} className="block appearance-none w-full h-full border border-[#ababab] bg-white pl-[2px] pb-[2px]">
      <option>{value}</option>
    </select>
    <span className="absolute right-0 top-0 w-[20px] h-[20px] flex items-center justify-center border-2 border-l border-[#ababab] bg-[#e1e1e1] pointer-events-none">
      <svg className="w-[8px] h-[5px]" viewBox="0 0 8 5" fill="none" stroke="#444" strokeWidth="1.200"><path d="M.5.5L4 4 7.500.5" /></svg>
    </span>
  </div>
);

const Label = ({ htmlFor, text, mnemonic, end = ':', dim, short }: { htmlFor: string; text: string; mnemonic: string; end?: string; dim?: boolean; short?: boolean }) => (
  <label htmlFor={htmlFor} className={`whitespace-nowrap ${short ? 'leading-[20px]' : 'leading-[23px]'} ${dim ? 'text-[#838383]' : ''}`}>
    {text}(<u className="underline-offset-2">{mnemonic}</u>){end}
  </label>
);

const fieldset = 'border border-[#dcdcdc] pl-[11px] pr-[10px] pb-[8px]';
const legend = 'w-[calc(100%+10px)] -ml-[6px] pl-[3px] h-[20px] leading-[20px]';
const fields = 'grid grid-cols-[91px_89px_79px_75px_52px_79px] items-start';

const Step = ({ n, className }: { n: number; className: string }) => (
  <div className={`absolute w-[40px] h-[40px] rounded-full bg-white p-[3px] shadow-[1px_2px_5px_rgba(0,0,0,0.35)] ${className}`}>
    <div className="w-full h-full rounded-full border border-[#ff0000] flex items-center justify-center text-[26px] leading-none font-black text-[#ff0000] font-['Inter',sans-serif] [text-shadow:3px_3px_1px_#cfcfcf]">
      {n}
    </div>
  </div>
);

const ParagraphDialog = () => (
  <div
    role="dialog"
    aria-label="段落"
    className="absolute top-[193px] left-1/2 -translate-x-1/2 w-[528px] border border-[#1883d7] bg-[#f0f0f0] text-[12px] text-black shadow-[0_4px_16px_rgba(0,0,0,0.4)]"
  >
    <div className="flex items-center h-[30px] bg-white pl-[8px] pr-[17px] pb-[1px]">
      <h2 className="flex-1">段落</h2>
      <button aria-label="ヘルプ" className="font-semibold mr-[37px]">?</button>
      <button aria-label="閉じる">
        <svg className="w-[11px] h-[11px]" viewBox="0 0 11 11" stroke="#000" strokeWidth="1.100"><path d="M.5.5l10 10M10.500.5l-10 10" /></svg>
      </button>
    </div>

    <div className="pt-[8px] px-[6px] pb-[9px]">
      <div role="tablist" className="flex items-end whitespace-nowrap">
        <button role="tab" aria-selected="true" className="w-[120px] h-[22px] -mb-px relative bg-white border border-b-0 border-[#dcdcdc] leading-[20px]">
          インデントと行間隔(<u>I</u>)
        </button>
        <button role="tab" aria-selected="false" className="w-[55px] h-[20px] border border-l-0 border-b-0 border-[#dcdcdc] leading-[20px]">
          体裁(<u>H</u>)
        </button>
      </div>

      <div className="bg-white border border-[#dcdcdc] pt-[9px] pl-[12px] pr-[10px] pb-[16px] mr-[2px] flex flex-col gap-[6px]">
        <fieldset className={fieldset}>
          <legend className={legend}>全般</legend>
          <div className="flex pt-[6px]">
            <div className="w-[58px]"><Label htmlFor="align" text="配置" mnemonic="G" short /></div>
            <Drop id="align" value="" width="w-[91px]" />
          </div>
        </fieldset>

        <fieldset className={fieldset}>
          <legend className={legend}>インデント</legend>
          <div className={`${fields} pt-[6px]`}>
            <Label htmlFor="before-text" text="テキストの前" mnemonic="R" />
            <Spin id="before-text" value="0 cm" />
            <Label htmlFor="first-line" text="最初の行" mnemonic="S" short />
            <Drop id="first-line" value="(なし)" width="w-[65px]" />
            <Label htmlFor="indent-width" text="幅" mnemonic="Y" dim />
            <Spin id="indent-width" value="" disabled />
          </div>
        </fieldset>

        <fieldset className={fieldset}>
          <legend className={legend}>間隔</legend>
          <div className={`${fields} gap-y-[4px] pt-[6px]`}>
            <Label htmlFor="space-before" text="段落前" mnemonic="B" />
            <Spin id="space-before" value="0 pt" />
            <Label htmlFor="line-spacing" text="行間" mnemonic="N" short />
            <Drop id="line-spacing" value="固定値" width="w-[65px]" />
            <Label htmlFor="spacing-at" text="間隔" mnemonic="A" end="" />
            <div className="relative">
              <Spin id="spacing-at" value="11 pt" />
              <span className="absolute left-[2px] top-[4px] w-px h-[15px] bg-black" />
              <span className="absolute -left-[5px] -top-[4px] w-[70px] h-[32px] border-7 border-[#ff0000] rounded-[5px] pointer-events-none" />
              <Step n={4} className="left-[9px] -top-[53px]" />
            </div>
            <Label htmlFor="space-after" text="段落後" mnemonic="E" />
            <Spin id="space-after" value="0 pt" />
          </div>
        </fieldset>
      </div>

      <div className="flex items-center mt-[6px] mx-px whitespace-nowrap">
        <button className="w-[109px] h-[23px] border border-[#adadad] bg-[#e1e1e1]">
          タブとリーダー(<u>T</u>)...
        </button>
        <div className="relative ml-auto mr-[10px]">
          <button className="block w-[75px] h-[23px] bg-[#e5f1fb]">OK</button>
          <span className="absolute -inset-x-[4px] -top-[4px] h-[32px] border-7 border-[#ff0000] rounded-[5px] pointer-events-none" />
          <Step n={5} className="-left-[59px] -top-[11px]" />
        </div>
        <button className="w-[73px] h-[23px] border border-[#adadad] bg-[#e1e1e1]">キャンセル</button>
      </div>
    </div>
  </div>
);

export default function App() {
  return (
    <div className="relative flex flex-col h-screen overflow-hidden bg-[#e6e6e6] font-['Noto_Sans','Noto_Sans_CJK_JP',sans-serif] [font-feature-settings:'palt']">
      <Header />
      <Ribbon />
      <FormulaBar />
      <Sheet />
      <SheetTabs />
      <StatusBar />
      <ParagraphDialog />
    </div>
  );
}
